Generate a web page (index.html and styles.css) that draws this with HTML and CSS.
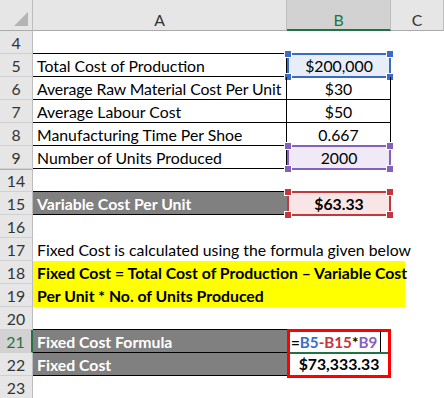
FILE: index.html
```html
<!DOCTYPE html>
<html>
<head>
<meta charset="utf-8">
<link rel="stylesheet" href="styles.css">
</head>
<body>
<div class="sheet">
  <div class="corner"><span class="tri"></span></div>
  <div class="colhead">A</div>
  <div class="colhead sel">B</div>
  <div class="colhead">C</div>

  <div class="rh">4</div>
  <div class="c bb"></div>
  <div class="c"></div>
  <div class="c"></div>

  <div class="rh">5</div>
  <div class="c tb">Total Cost of Production</div>
  <div class="c ref blue num">$200,000<span class="h tl"></span><span class="h tr"></span><span class="h bl"></span><span class="h br"></span></div>
  <div class="c"></div>

  <div class="rh">6</div>
  <div class="c tb tight">Average Raw Material Cost Per Unit</div>
  <div class="c tb num">$30</div>
  <div class="c"></div>

  <div class="rh">7</div>
  <div class="c tb">Average Labour Cost</div>
  <div class="c tb num">$50</div>
  <div class="c"></div>

  <div class="rh">8</div>
  <div class="c tb">Manufacturing Time Per Shoe</div>
  <div class="c tb num">0.667</div>
  <div class="c"></div>

  <div class="rh">9</div>
  <div class="c tb">Number of Units Produced</div>
  <div class="c ref purple num">2000<span class="h tl"></span><span class="h tr"></span><span class="h bl"></span><span class="h br"></span></div>
  <div class="c"></div>

  <div class="rh hidden-above">14</div>
  <div class="c bb"></div>
  <div class="c"></div>
  <div class="c"></div>

  <div class="rh">15</div>
  <div class="c dark">Variable Cost Per Unit</div>
  <div class="c ref red num bold">$63.33<span class="h tl"></span><span class="h tr"></span><span class="h bl"></span><span class="h br"></span></div>
  <div class="c"></div>

  <div class="rh">16</div>
  <div class="c"></div>
  <div class="c"></div>
  <div class="c"></div>

  <div class="rh">17</div>
  <div class="c wide">Fixed Cost is calculated using the formula given below</div>

  <div class="rh">18</div>
  <div class="c wide"><div class="hl">Fixed Cost = Total Cost of Production – Variable Cost</div></div>

  <div class="rh">19</div>
  <div class="c wide"><div class="hl">Per Unit * No. of Units Produced</div></div>

  <div class="rh">20</div>
  <div class="c bb"></div>
  <div class="c"></div>
  <div class="c"></div>

  <div class="rh act">21</div>
  <div class="c dark">Fixed Cost Formula</div>
  <div class="c edit"><span class="k">=</span><span class="r1">B5</span><span class="r2">-B15</span><span class="k">*</span><span class="r3">B9</span><span class="caret"></span><span class="active-line"></span></div>
  <div class="c"></div>

  <div class="rh">22</div>
  <div class="c dark">Fixed Cost</div>
  <div class="c num bold result">$73,333.33</div>
  <div class="c"></div>

  <div class="rh">23</div>
  <div class="c"></div>
  <div class="c"></div>
  <div class="c"></div>
</div>
</body>
</html>
```

FILE: styles.css
```css
* { box-sizing: border-box; }
html, body { margin: 0; padding: 0; background: #fff; }
body { width: 444px; height: 398px; overflow: hidden; }

.sheet {
  display: grid;
  grid-template-columns: 33px 254px 104px 53px;
  grid-template-rows: 31px;
  grid-auto-rows: 23px;
  font-family: Lato, "Open Sans", sans-serif;
  font-size: 15.8px;
  color: #000;
}

.corner {
  background: #e6e6e6;
  border-right: 1px solid #bdbdbd;
  border-bottom: 1px solid #ababab;
  position: relative;
}
.tri {
  position: absolute;
  right: 4px;
  bottom: 4px;
  width: 0;
  height: 0;
  border-left: 14px solid transparent;
  border-bottom: 14px solid #b4b4b4;
}

.colhead {
  background: #e6e6e6;
  border-right: 1px solid #bdbdbd;
  border-bottom: 1px solid #ababab;
  text-align: center;
  padding-top: 11px;
  line-height: 18px;
  color: #333;
  font-size: 15.8px;
}
.colhead.sel {
  background: #d2d2d2;
  border-bottom: 2px solid #217346;
  color: #217346;
}

.rh {
  background: #e6e6e6;
  border-right: 1px solid #bdbdbd;
  border-bottom: 1px solid #d0d0d0;
  text-align: center;
  line-height: 24px;
  color: #333;
}
.rh.hidden-above { border-top: 1px solid #b0b0b0; line-height: 22px; }
.rh.act {
  background: #d2d2d2;
  border-right: 2px solid #217346;
  color: #217346;
}

.c {
  line-height: 24px;
  white-space: nowrap;
  padding-left: 4px;
  position: relative;
}
.tight { letter-spacing: -0.1px; }
.bb { border-bottom: 1px solid #000; }
.tb { border-bottom: 1px solid #000; border-right: 1px solid #000; }
.num { text-align: center; padding-left: 0; }
.bold { font-weight: 700; }

.dark {
  background: #808080;
  color: #fff;
  font-weight: 700;
  border-bottom: 1px solid #000;
}

.wide { grid-column: span 3; }
.hl {
  background: #ffff00;
  width: 372px;
  font-weight: 700;
  margin-left: -4px;
  padding-left: 4px;
  height: 23px;
}

.ref { border: 2px solid; margin: -1px 0 0 0; height: 25px; line-height: 21px; }
.ref.blue { border-color: #3c6bc5; background: #e8eef8; }
.ref.purple { border-color: #8660bd; background: #efeaf6; }
.ref.red { border-color: #c2383d; background: #f8e6e6; }
.h {
  position: absolute;
  width: 6px;
  height: 6px;
  border: 1px solid #fff;
  box-sizing: content-box;
}
.ref.blue .h { background: #3c6bc5; }
.ref.purple .h { background: #8660bd; }
.ref.red .h { background: #c2383d; }
.h.tl { left: -5px; top: -5px; }
.h.tr { right: -5px; top: -5px; }
.h.bl { left: -5px; bottom: -5px; }
.h.br { right: -5px; bottom: -5px; }

.edit {
  font-weight: 700;
  font-size: 15.2px;
  padding-left: 1px;
  border: 3px solid #ff0000;
  border-bottom: none;
  line-height: 20px;
  margin-top: -1px;
  height: 24px;
}
.edit .k { color: #000; }
.edit .r1 { color: #3c6bc5; }
.edit .r2 { color: #c2383d; }
.edit .r3 { color: #8660bd; }
.caret {
  display: inline-block;
  width: 1px;
  height: 22px;
  background: #000;
  vertical-align: top;
  margin-left: 3px;
  margin-top: -1px;
}
.active-line {
  position: absolute;
  left: 0;
  right: 0;
  bottom: -1px;
  height: 2px;
  background: #217346;
}
.result {
  border: 3px solid #ff0000;
  border-top: none;
  height: 25px;
  line-height: 22px;
}
```
